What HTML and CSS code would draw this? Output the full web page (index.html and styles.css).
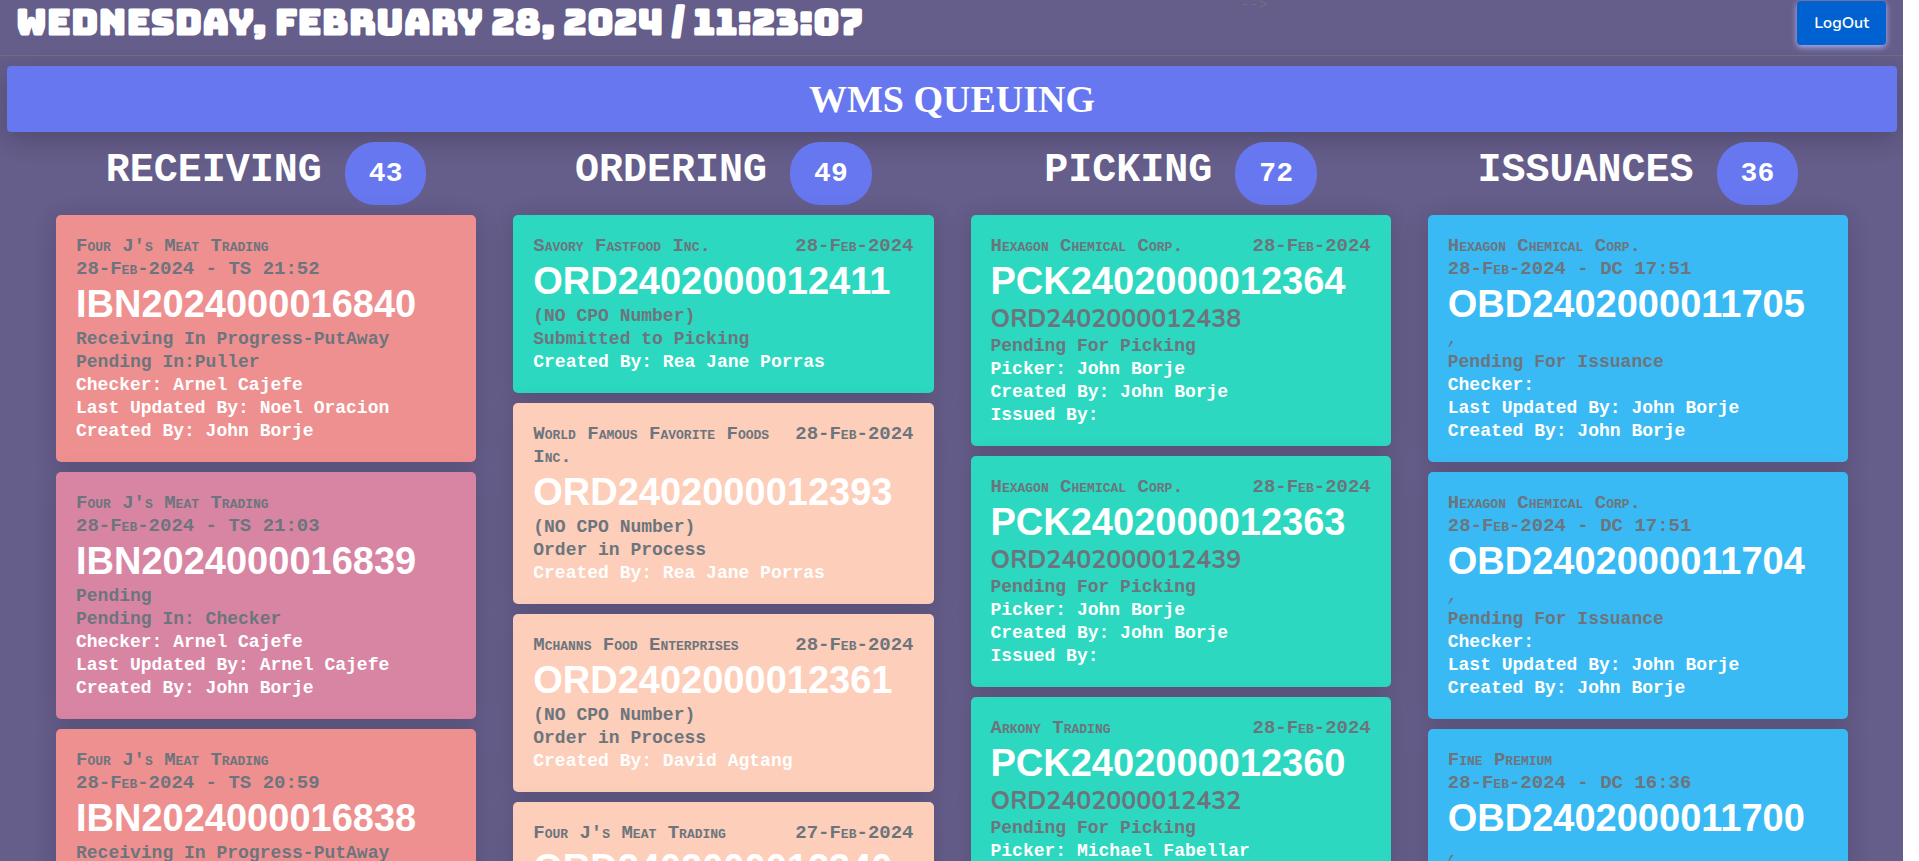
FILE: index.html
```
<!DOCTYPE html>
<html lang="en">
  <head>
    <meta charset="UTF-8" />
    <meta name="viewport" content="width=device-width, initial-scale=1" />
    <title>WMS Queuing</title>
    <link rel="stylesheet" href="styles.css">
  </head>
  <body>
    <header class="topbar">
      <h1 class="clock">Wednesday, February 28, 2024 / 11:23:07</h1>
      <span class="stray">--&gt;</span>
      <button class="logout" type="button">LogOut</button>
    </header>

    <h2 class="banner">WMS QUEUING</h2>

    <main class="board">
      <section class="column">
        <h3>RECEIVING <span class="count">43</span></h3>

        <article class="card coral">
          <div class="meta"><span>Four J's Meat Trading<br>28-Feb-2024 - TS 21:52</span></div>
          <strong class="number">IBN2024000016840</strong>
          <div class="details">
            <p>Receiving In Progress-PutAway</p>
            <p>Pending In:Puller</p>
            <p class="person">Checker: Arnel Cajefe</p>
            <p class="person">Last Updated By: Noel Oracion</p>
            <p class="person">Created By: John Borje</p>
          </div>
        </article>

        <article class="card pink">
          <div class="meta"><span>Four J's Meat Trading<br>28-Feb-2024 - TS 21:03</span></div>
          <strong class="number">IBN2024000016839</strong>
          <div class="details">
            <p>Pending</p>
            <p>Pending In: Checker</p>
            <p class="person">Checker: Arnel Cajefe</p>
            <p class="person">Last Updated By: Arnel Cajefe</p>
            <p class="person">Created By: John Borje</p>
          </div>
        </article>

        <article class="card coral">
          <div class="meta"><span>Four J's Meat Trading<br>28-Feb-2024 - TS 20:59</span></div>
          <strong class="number">IBN2024000016838</strong>
          <div class="details">
            <p>Receiving In Progress-PutAway</p>
          </div>
        </article>
      </section>

      <section class="column">
        <h3>ORDERING <span class="count">49</span></h3>

        <article class="card teal">
          <div class="meta"><span>Savory Fastfood Inc.</span><time>28-Feb-2024</time></div>
          <strong class="number">ORD2402000012411</strong>
          <div class="details">
            <p>(NO CPO Number)</p>
            <p>Submitted to Picking</p>
            <p class="person">Created By: Rea Jane Porras</p>
          </div>
        </article>

        <article class="card peach">
          <div class="meta"><span>World Famous Favorite Foods Inc.</span><time>28-Feb-2024</time></div>
          <strong class="number">ORD2402000012393</strong>
          <div class="details">
            <p>(NO CPO Number)</p>
            <p>Order in Process</p>
            <p class="person">Created By: Rea Jane Porras</p>
          </div>
        </article>

        <article class="card peach">
          <div class="meta"><span>Mchanns Food Enterprises</span><time>28-Feb-2024</time></div>
          <strong class="number">ORD2402000012361</strong>
          <div class="details">
            <p>(NO CPO Number)</p>
            <p>Order in Process</p>
            <p class="person">Created By: David Agtang</p>
          </div>
        </article>

        <article class="card peach">
          <div class="meta"><span>Four J's Meat Trading</span><time>27-Feb-2024</time></div>
          <strong class="number">ORD2402000012340</strong>
        </article>
      </section>

      <section class="column">
        <h3>PICKING <span class="count">72</span></h3>

        <article class="card teal">
          <div class="meta"><span>Hexagon Chemical Corp.</span><time>28-Feb-2024</time></div>
          <strong class="number">PCK2402000012364</strong>
          <span class="order">ORD2402000012438</span>
          <div class="details">
            <p>Pending For Picking</p>
            <p class="person">Picker: John Borje</p>
            <p class="person">Created By: John Borje</p>
            <p class="person">Issued By:</p>
          </div>
        </article>

        <article class="card teal">
          <div class="meta"><span>Hexagon Chemical Corp.</span><time>28-Feb-2024</time></div>
          <strong class="number">PCK2402000012363</strong>
          <span class="order">ORD2402000012439</span>
          <div class="details">
            <p>Pending For Picking</p>
            <p class="person">Picker: John Borje</p>
            <p class="person">Created By: John Borje</p>
            <p class="person">Issued By:</p>
          </div>
        </article>

        <article class="card teal">
          <div class="meta"><span>Arkony Trading</span><time>28-Feb-2024</time></div>
          <strong class="number">PCK2402000012360</strong>
          <span class="order">ORD2402000012432</span>
          <div class="details">
            <p>Pending For Picking</p>
            <p class="person">Picker: Michael Fabellar</p>
          </div>
        </article>
      </section>

      <section class="column">
        <h3>ISSUANCES <span class="count">36</span></h3>

        <article class="card blue">
          <div class="meta"><span>Hexagon Chemical Corp.<br>28-Feb-2024 - DC 17:51</span></div>
          <strong class="number">OBD2402000011705</strong>
          <div class="details">
            <p class="plate">,</p>
            <p>Pending For Issuance</p>
            <p class="person">Checker:</p>
            <p class="person">Last Updated By: John Borje</p>
            <p class="person">Created By: John Borje</p>
          </div>
        </article>

        <article class="card blue">
          <div class="meta"><span>Hexagon Chemical Corp.<br>28-Feb-2024 - DC 17:51</span></div>
          <strong class="number">OBD2402000011704</strong>
          <div class="details">
            <p class="plate">,</p>
            <p>Pending For Issuance</p>
            <p class="person">Checker:</p>
            <p class="person">Last Updated By: John Borje</p>
            <p class="person">Created By: John Borje</p>
          </div>
        </article>

        <article class="card blue">
          <div class="meta"><span>Fine Premium<br>28-Feb-2024 - DC 16:36</span></div>
          <strong class="number">OBD2402000011700</strong>
          <div class="details">
            <p class="plate">,</p>
          </div>
        </article>
      </section>
    </main>
  </body>
</html>
```
FILE: styles.css
```
* {
  box-sizing: border-box;
}
html {
  background: #fff;
}
body {
  height: 100vh;
  margin: 0 16px 0 0;
  overflow: hidden;
  background: #655d8a;
  color: #6c757d;
  font-family: Consolas, "Liberation Mono", monospace;
}
h1,
h2,
h3,
p {
  margin: 0;
}

.topbar {
  display: grid;
  grid-template-columns: 11fr 5fr auto;
  align-items: start;
  height: 56px;
  padding: 1px 17px 0 16px;
  border-bottom: 1px solid #6c717f;
}
.clock {
  color: #fff;
  font: 900 37px/42px Bungee, Inter, sans-serif;
  text-transform: uppercase;
  white-space: nowrap;
}
.stray {
  font-size: 15px;
  line-height: 10px;
}
.logout {
  height: 44px;
  padding: 0 17px;
  border: 0;
  border-radius: 4px;
  background: #0062d1;
  box-shadow: 0 2px 6px #acb5f6;
  color: #fff;
  font: 600 16px/24px Nunito, "Open Sans", sans-serif;
  cursor: pointer;
}

.banner {
  margin: 10px 6px 0 7px;
  border-radius: 4px;
  background: #6777ef;
  box-shadow: 0 8px 24px rgba(0, 0, 0, 0.2);
  color: #fff;
  font: bold 38px/66px "Times New Roman", "Liberation Serif", serif;
  text-align: center;
}

.board {
  display: grid;
  grid-template-columns: repeat(4, minmax(0, 1fr));
  gap: 37px;
  padding: 10px 55px 0 56px;
}
.column {
  display: flex;
  flex-direction: column;
  gap: 10px;
}
.column h3 {
  display: flex;
  align-items: baseline;
  justify-content: center;
  gap: 23px;
  color: #fff;
  font: bold 40px/40px "Courier New", "Liberation Mono", monospace;
}
.count {
  padding: 0 24px;
  border-radius: 30px;
  background: #6777ef;
  font-size: 28px;
  line-height: 63px;
}

.card {
  padding: 20px 20px 18px;
  border-radius: 5px;
  box-shadow: 0 4px 24px rgba(0, 0, 0, 0.15);
}
.coral {
  background: #ef9090;
}
.pink {
  background: #d885a3;
}
.teal {
  background: #2cd8bf;
}
.peach {
  background: #fdceb9;
}
.blue {
  background: #3abaf4;
}

.meta {
  display: flex;
  justify-content: space-between;
  font: bold 19px/23px "Courier New", "Liberation Mono", monospace;
  font-variant: small-caps;
}
.meta time {
  flex: none;
}
.number {
  display: block;
  color: #fff;
  font: bold 38px/46px Arial, "Liberation Sans", sans-serif;
}
.order {
  display: block;
  font: bold 25px/30px Nunito, Lato, sans-serif;
}
.details {
  padding-top: 1px;
  margin-bottom: 1px;
  font-size: 18px;
  font-weight: bold;
  line-height: 23px;
}
.person {
  color: #fff;
}
.plate {
  font-style: italic;
  font-weight: normal;
}
```
